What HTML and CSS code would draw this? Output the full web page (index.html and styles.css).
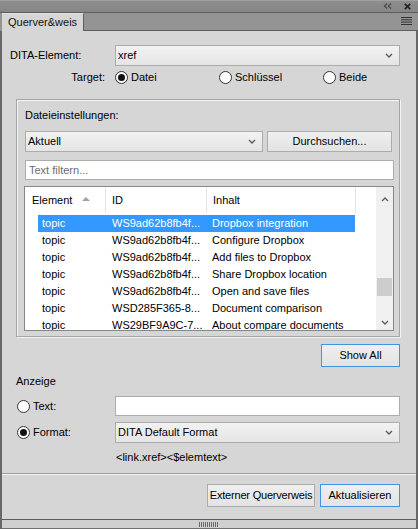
FILE: index.html
```html
<!DOCTYPE html>
<html>
<head>
<meta charset="utf-8">
<link rel="stylesheet" href="styles.css">
</head>
<body>
<div class="window">
  <div class="titlebar">
    <svg class="tb-icon" width="9" height="6" viewBox="0 0 9 6"><path d="M4 0.5 L1.5 3 L4 5.5 M8 0.5 L5.5 3 L8 5.5" fill="none" stroke="#4a4a4a" stroke-width="1.3"/></svg>
    <svg class="tb-icon close" width="7" height="7" viewBox="0 0 7 7"><path d="M0.8 0.8 L6.2 6.2 M6.2 0.8 L0.8 6.2" stroke="#262626" stroke-width="1.8"/></svg>
  </div>
  <div class="tabbar">
    <div class="tab">Querver&amp;weis</div>
    <div class="tab-rest">
      <svg width="11" height="8" viewBox="0 0 11 8"><rect x="0" y="0" width="11" height="1" fill="#333"/><rect x="0" y="2.3" width="11" height="1" fill="#333"/><rect x="0" y="4.6" width="11" height="1" fill="#333"/><rect x="0" y="7" width="11" height="1" fill="#333"/></svg>
    </div>
  </div>
  <div class="frame">
    <div class="content">
      <div class="form-row">
        <span class="lbl">DITA-Element:</span>
        <div class="select"><span>xref</span><svg class="chev" width="8" height="5" viewBox="0 0 8 5"><path d="M1 1 L4 4 L7 1" fill="none" stroke="#5a5a5a" stroke-width="1.4"/></svg></div>
      </div>
      <div class="target-row">
        <span class="lbl-right">Target:</span>
        <div class="radios">
          <span class="radio"><span class="dot checked"></span>Datei</span>
          <span class="radio"><span class="dot"></span>Schlüssel</span>
          <span class="radio"><span class="dot"></span>Beide</span>
        </div>
      </div>
      <div class="group">
        <div class="group-label">Dateieinstellungen:</div>
        <div class="file-row">
          <div class="select file-select"><span>Aktuell</span><svg class="chev" width="8" height="5" viewBox="0 0 8 5"><path d="M1 1 L4 4 L7 1" fill="none" stroke="#5a5a5a" stroke-width="1.4"/></svg></div>
          <div class="btn browse">Durchsuchen...</div>
        </div>
        <div class="input filter">Text filtern...</div>
        <div class="listview">
          <div class="lv-main">
            <div class="lv-header">
              <div class="hc c1">Element<svg class="sort" width="8" height="4" viewBox="0 0 8 4"><path d="M0 4 L4 0 L8 4 Z" fill="#a2a2a2"/></svg></div>
              <div class="hc c2">ID</div>
              <div class="hc c3">Inhalt</div>
            </div>
            <div class="lv-rows">
              <div class="row selected"><span>topic</span><span>WS9ad62b8fb4f...</span><span>Dropbox integration</span></div>
              <div class="row"><span>topic</span><span>WS9ad62b8fb4f...</span><span>Configure Dropbox</span></div>
              <div class="row"><span>topic</span><span>WS9ad62b8fb4f...</span><span>Add files to Dropbox</span></div>
              <div class="row"><span>topic</span><span>WS9ad62b8fb4f...</span><span>Share Dropbox location</span></div>
              <div class="row"><span>topic</span><span>WS9ad62b8fb4f...</span><span>Open and save files</span></div>
              <div class="row"><span>topic</span><span>WSD285F365-8...</span><span>Document comparison</span></div>
              <div class="row"><span>topic</span><span>WS29BF9A9C-7...</span><span>About compare documents</span></div>
            </div>
          </div>
          <div class="scrollbar">
            <div class="sb-btn up"><svg width="8" height="5" viewBox="0 0 8 5"><path d="M1 4 L4 1 L7 4" fill="none" stroke="#606060" stroke-width="1.4"/></svg></div>
            <div class="sb-track"><div class="sb-thumb"></div></div>
            <div class="sb-btn down"><svg width="8" height="5" viewBox="0 0 8 5"><path d="M1 1 L4 4 L7 1" fill="none" stroke="#606060" stroke-width="1.4"/></svg></div>
          </div>
        </div>
      </div>
      <div class="showall-row"><div class="btn default showall">Show All</div></div>
      <div class="section-label">Anzeige</div>
      <div class="disp-row">
        <span class="radio"><span class="dot"></span>Text:</span>
        <div class="input"></div>
      </div>
      <div class="disp-row fmt">
        <span class="radio"><span class="dot checked"></span>Format:</span>
        <div class="select"><span>DITA Default Format</span><svg class="chev" width="8" height="5" viewBox="0 0 8 5"><path d="M1 1 L4 4 L7 1" fill="none" stroke="#5a5a5a" stroke-width="1.4"/></svg></div>
      </div>
      <div class="hint">&lt;link.xref&gt;&lt;$elemtext&gt;</div>
    </div>
    <div class="footer">
      <div class="btn ext">Externer Querverweis</div>
      <div class="btn default upd">Aktualisieren</div>
    </div>
    <div class="grip"><span class="grip-dots"></span></div>
  </div>
</div>
</body>
</html>
```
FILE: styles.css
```css
* { box-sizing: border-box; }
html, body { margin: 0; padding: 0; }
body {
  font: 11px/13px "Liberation Sans", Arial, sans-serif;
  color: #000;
  background: #d6d6d6;
}
.window {
  width: 418px;
  height: 529px;
  display: flex;
  flex-direction: column;
  background: #d6d6d6;
  overflow: hidden;
}
.titlebar {
  height: 13px;
  background: linear-gradient(#a0a0a0 0, #a0a0a0 1px, #8d8d8d 1px, #868686 100%);
  border-bottom: 1px solid #5c5c5c;
  display: flex;
  align-items: center;
  justify-content: flex-end;
  padding-right: 7px;
  gap: 12px;
}
.tb-icon { display: block; }
.tabbar {
  height: 18px;
  display: flex;
  background: #949494;
}
.tab {
  width: 82px;
  margin-left: 2px;
  background: #d6d6d6;
  border-top: 1px solid #e2e2e2;
  border-right: 1px solid #606060;
  padding-left: 6px;
  line-height: 17px;
  color: #111;
}
.tab-rest {
  flex: 1;
  border-bottom: 1px solid #5e5e5e;
  display: flex;
  justify-content: flex-end;
  align-items: center;
  padding-right: 6px;
  padding-bottom: 1px;
}
.tab-rest svg { display: block; }
.frame {
  flex: 1;
  border-left: 2px solid #686868;
  border-right: 2px solid #686868;
  display: flex;
  flex-direction: column;
}
.content {
  height: 442px;
  padding: 14px 16px 0 8px;
  display: flex;
  flex-direction: column;
}
.form-row {
  display: grid;
  grid-template-columns: 105px 1fr;
  align-items: center;
  height: 21px;
}
.select {
  height: 21px;
  border: 1px solid #acacac;
  background: linear-gradient(#f2f2f2, #e5e5e5);
  display: flex;
  align-items: center;
  justify-content: space-between;
  padding: 0 6px 0 2px;
}
.chev { display: block; }
.target-row {
  margin-top: 4px;
  height: 14px;
  display: grid;
  grid-template-columns: 105px 1fr;
  align-items: center;
}
.lbl-right { text-align: right; padding-right: 10px; }
.radios { display: flex; }
.radios .radio { width: 104px; }
.radio {
  display: flex;
  align-items: center;
  gap: 3px;
}
.dot {
  width: 13px;
  height: 13px;
  border-radius: 50%;
  border: 1px solid #333;
  background: #fff;
  display: flex;
  align-items: center;
  justify-content: center;
  flex: none;
}
.dot.checked::after {
  content: "";
  width: 7px;
  height: 7px;
  border-radius: 50%;
  background: #111;
}
.group {
  margin: 15px 0 0 6px;
  height: 238px;
  border: 1px solid #a5a5a5;
  box-shadow: inset 1px 1px 0 #f4f4f4, 1px 1px 0 #f4f4f4;
  padding: 9px 5px 0 8px;
  display: flex;
  flex-direction: column;
}
.group-label { height: 13px; }
.file-row {
  margin-top: 9px;
  margin-right: 2px;
  display: flex;
  gap: 4px;
}
.file-select { width: 238px; }
.btn {
  height: 21px;
  border: 1px solid #acacac;
  background: linear-gradient(#efefef, #e3e3e3);
  display: flex;
  align-items: center;
  justify-content: center;
  color: #000;
  white-space: nowrap;
}
.browse { flex: 1; }
.input {
  height: 20px;
  background: #fff;
  border: 1px solid #acacac;
  padding-left: 3px;
  display: flex;
  align-items: center;
}
.filter {
  margin-top: 8px;
  color: #6d6d6d;
}
.listview {
  margin: 6px 0 0 -1px;
  height: 145px;
  border: 1px solid #828790;
  background: #fff;
  display: flex;
  overflow: hidden;
}
.lv-main { flex: 1; overflow: hidden; }
.lv-header {
  height: 28px;
  display: flex;
}
.hc {
  height: 26px;
  border-right: 1px solid #e5e5e5;
  padding-left: 6px;
  display: flex;
  align-items: center;
}
.hc.c1 { width: 81px; padding-left: 7px; }
.hc.c2 { width: 101px; }
.hc.c3 { width: 149px; }
.sort { display: block; margin-left: 10px; margin-top: -2px; }
.row {
  margin-left: 13px;
  width: 317px;
  height: 17px;
  display: grid;
  grid-template-columns: 67px 101px 149px;
  align-items: center;
}
.row span { white-space: nowrap; overflow: hidden; }
.row span:nth-child(1) { padding-left: 4px; }
.row span:nth-child(2) { padding-left: 7px; }
.row span:nth-child(3) { padding-left: 6px; }
.row.selected { background: #3399ff; color: #fff; }
.scrollbar {
  width: 17px;
  background: #f0f0f0;
  display: flex;
  flex-direction: column;
}
.sb-btn {
  display: flex;
  align-items: center;
  justify-content: center;
}
.sb-btn.up { height: 24px; }
.sb-btn.down { height: 16px; }
.sb-btn svg { display: block; }
.sb-track { flex: 1; padding-top: 67px; }
.sb-thumb {
  margin: 0 1px;
  height: 18px;
  background: #cdcdcd;
}
.showall-row {
  margin-top: 7px;
  display: flex;
  justify-content: flex-end;
}
.btn.default { border-color: #3d95e6; }
.showall { width: 79px; height: 23px; }
.section-label {
  margin: 8px 0 0 6px;
  height: 13px;
}
.disp-row {
  margin-top: 8px;
  margin-left: 7px;
  display: grid;
  grid-template-columns: 98px 1fr;
  align-items: center;
}
.disp-row.fmt { margin-top: 6px; }
.hint {
  margin: 8px 0 0 106px;
  height: 13px;
}
.footer {
  height: 46px;
  border-top: 1px solid #a0a0a0;
  box-shadow: inset 0 1px 0 #f2f2f2;
  display: flex;
  justify-content: flex-end;
  gap: 5px;
  padding: 10px 16px 0 0;
}
.footer .btn { height: 23px; }
.ext { width: 108px; letter-spacing: -0.2px; }
.upd { width: 80px; }
.grip {
  flex: 1;
  border-top: 1px solid #5c5c5c;
  border-bottom: 1px solid #707070;
  background: #d0d0d0;
  display: flex;
  justify-content: center;
  align-items: center;
}
.grip-dots {
  width: 20px;
  height: 5px;
  background: repeating-linear-gradient(90deg, #6a6a6a 0 1px, transparent 1px 2px);
}
```
